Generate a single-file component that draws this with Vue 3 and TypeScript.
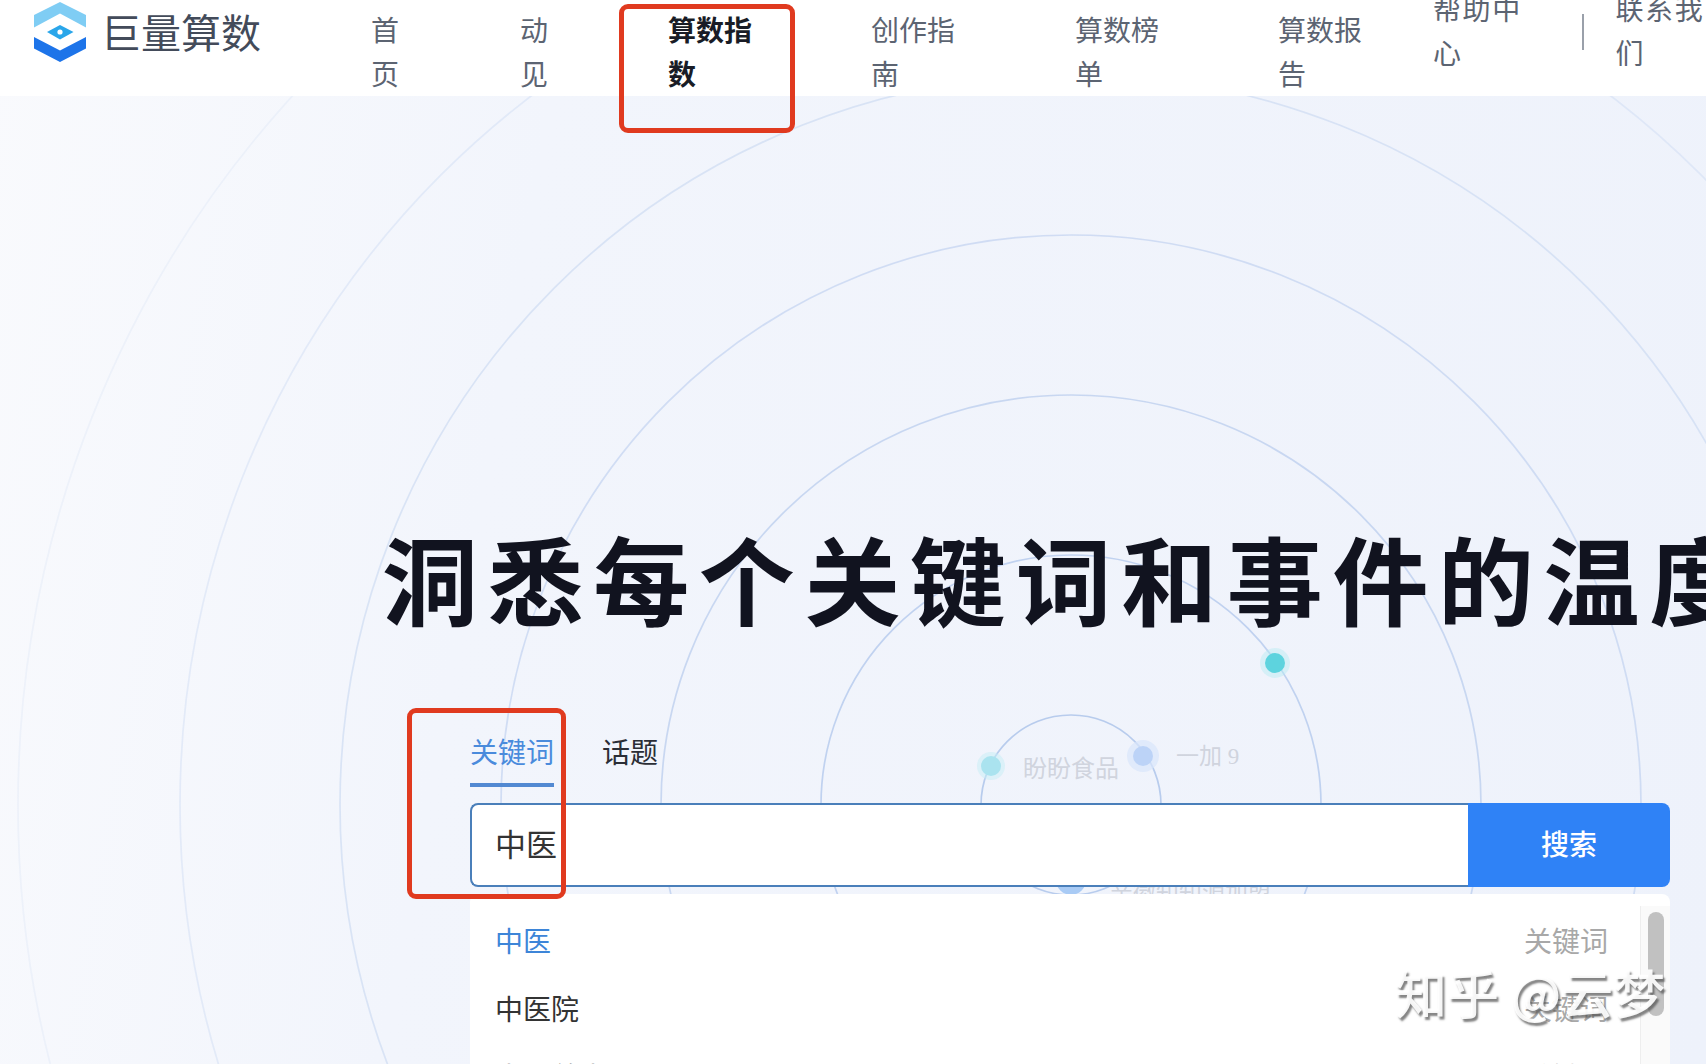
<script setup lang="ts">
interface NavItem { label: string; size: string; active?: boolean }
const nav: NavItem[] = [
  { label: '首页', size: 'n1' },
  { label: '动见', size: 'n1b' },
  { label: '算数指数', size: 'n2', active: true },
  { label: '创作指南', size: 'n2b' },
  { label: '算数榜单', size: 'n2' },
  { label: '算数报告', size: 'n3' },
]
const radii: number[] = [90, 250, 410, 570, 731, 891, 1053]
const ringOpacity = (i: number): number => 1 - i * 0.14
const rows = [
  { text: '中医', kind: '关键词', hit: true },
  { text: '中医院', kind: '关键词', hit: false },
  { text: '中医养生', kind: '关键词', hit: false },
]
</script>

<template>
  <div class="page">
    <svg class="rings" width="1706" height="1064" viewBox="0 0 1706 1064" fill="none">
      <circle
        v-for="(r, i) in radii"
        :key="r"
        cx="1071"
        cy="805"
        :r="r"
        stroke="#b8cced"
        stroke-width="1.7"
        :opacity="ringOpacity(i)"
      />
      <circle cx="1275" cy="663" r="15" fill="#b5ecf1" opacity="0.45" />
      <circle cx="1275" cy="663" r="10" fill="#5dd3de" />
      <circle cx="991" cy="766" r="14" fill="#c5edf5" opacity="0.5" />
      <circle cx="991" cy="766" r="10" fill="#aae3ef" />
      <circle cx="1143" cy="756" r="16" fill="#d8e5fb" opacity="0.7" />
      <circle cx="1143" cy="756" r="10" fill="#bcd3f7" />
      <circle cx="1071" cy="880" r="15" fill="#a9cbf5" />
    </svg>
    <span class="float-label l1">盼盼食品</span>
    <span class="float-label l2">一加 9</span>
    <span class="float-label l3">亲徽知知源加盟</span>

    <header class="header">
      <div class="logo">
        <svg class="logo-mark" width="54" height="62" viewBox="33 1 54 62">
          <polygon points="60,2 86,15 86,27.5 60,13.5 34,27.5 34,15" fill="#7fcdf4" />
          <polygon points="34,37 60,50.5 86,37 86,48.5 60,62 34,48.5" fill="#1d74e9" />
          <polygon points="47,32 60,25 73.5,32 60,39.5" fill="#2aa6ea" />
          <circle cx="60" cy="32" r="2.6" fill="#fff" />
        </svg>
        <span class="logo-text">巨量算数</span>
      </div>
      <nav class="nav">
        <a v-for="item in nav" :key="item.label" class="item" :class="[item.size, { active: item.active }]">{{ item.label }}</a>
        <a class="item help">帮助中心</a>
        <i class="divider"></i>
        <a class="item help contact">联系我们</a>
      </nav>
    </header>

    <main class="main">
      <h1 class="title">洞悉每个关键词和事件的温度</h1>
      <div class="panel">
        <div class="tabs">
          <span class="tab on">关键词</span>
          <span class="tab">话题</span>
        </div>
        <div class="search">
          <div class="input">中医</div>
          <button class="btn">搜索</button>
        </div>
        <div class="dropdown">
          <ul class="list">
            <li v-for="row in rows" :key="row.text" class="row" :class="{ hit: row.hit }">
              <span>{{ row.text }}</span>
              <span class="kind">{{ row.kind }}</span>
            </li>
          </ul>
          <div class="track"><div class="thumb"></div></div>
        </div>
      </div>
    </main>

    <div class="mark m1"></div>
    <div class="mark m2"></div>
    <div class="watermark">知乎&nbsp;@云梦</div>
  </div>
</template>

<style>
html, body { margin: 0; background: #fff; }
</style>

<style scoped>
.page {
  position: relative;
  width: 1706px;
  height: 1064px;
  overflow: hidden;
  background: linear-gradient(100deg, #f9fafd 0%, #f2f5fc 30%, #eef2fb 100%);
  font-family: "Noto Sans CJK SC", "Noto Sans", sans-serif;
}
.rings { position: absolute; left: 0; top: 0; }
.float-label {
  position: absolute;
  color: #d0d4de;
  white-space: nowrap;
  line-height: 1;
}
.l1 { left: 1023px; top: 755px; font-size: 24px; }
.l2 { left: 1176px; top: 745px; font-size: 23px; font-family: "Liberation Serif", "Noto Sans CJK SC", serif; }
.l3 { left: 1110px; top: 880px; font-size: 23px; }

.header {
  position: relative;
  display: flex;
  height: 96px;
  background: #fff;
}
.logo {
  flex: none;
  width: 371px;
  padding-left: 33px;
  box-sizing: border-box;
  display: flex;
  align-items: flex-start;
  gap: 14px;
}
.logo-mark { flex: none; margin-top: 1px; }
.logo-text {
  font-size: 40px;
  line-height: 62px;
  font-weight: 400;
  color: #434b5a;
  white-space: nowrap;
}
.nav { display: flex; align-items: flex-start; }
.item {
  flex: none;
  display: block;
  font-size: 28px;
  line-height: 43.5px;
  color: #5c6472;
  padding-top: 8px;
  box-sizing: content-box;
}
.n1 { width: 30px; margin-right: 119px; }
.n1b { width: 30px; margin-right: 118px; }
.n2 { width: 90px; margin-right: 113px; }
.n2b { width: 90px; margin-right: 114px; }
.n3 { width: 90px; margin-right: 65px; }
.active { color: #191c26; font-weight: 700; }
.help {
  width: 92px;
  letter-spacing: 1.6px;
  padding-top: 0;
  margin-top: -13px;
}
.divider {
  flex: none;
  width: 1.5px;
  height: 36px;
  margin: 14px 32px 0 57px;
  background: #9aa0aa;
}
.contact { width: 92px; }

.main { position: relative; }
.title {
  margin: 426px 0 0 382px;
  font-size: 96px;
  line-height: 110px;
  font-weight: 700;
  letter-spacing: 9.6px;
  color: #11131f;
  white-space: nowrap;
}
.panel { width: 1200px; margin: 98px 0 0 470px; }
.tabs { display: flex; gap: 48px; }
.tab {
  font-size: 28px;
  line-height: 42px;
  padding-bottom: 11px;
  border-bottom: 4px solid transparent;
  color: #2b2e36;
}
.tab.on { color: #4a8bdc; border-bottom-color: #5289d2; }
.search { display: flex; height: 84px; margin-top: 16px; }
.input {
  flex: 1;
  box-sizing: border-box;
  border: 2px solid #4a7fba;
  border-right: 0;
  border-radius: 8px 0 0 8px;
  background: #fff;
  padding-left: 23px;
  font-size: 31px;
  line-height: 76px;
  color: #333;
}
.btn {
  flex: none;
  width: 202px;
  border: 0;
  padding: 0 0 4px;
  border-radius: 0 8px 8px 0;
  background: #2f82f6;
  color: #fff;
  font: 500 28px "Noto Sans CJK SC", sans-serif;
}
.dropdown {
  display: flex;
  margin-top: 7px;
  height: 240px;
  background: #fff;
  border-radius: 8px 8px 0 0;
}
.list {
  flex: 1;
  margin: 0;
  padding: 12px 32px 0 25px;
  list-style: none;
}
.row {
  display: flex;
  justify-content: space-between;
  height: 68px;
  font-size: 28px;
  line-height: 68px;
  color: #333;
}
.row.hit { color: #3d85d8; }
.kind { color: #a8a8a8; }
.track {
  flex: none;
  width: 30px;
  box-sizing: border-box;
  margin-top: 12px;
  padding: 6px 7px 0 7px;
  background: #fafafa;
  border-left: 1px solid #eee;
}
.thumb {
  width: 16px;
  height: 104px;
  border-radius: 8px;
  background: #c1c1c1;
}

.mark {
  position: absolute;
  box-sizing: border-box;
  border: 5px solid #e03a1f;
  border-radius: 9px;
}
.m1 { left: 619px; top: 4px; width: 176px; height: 129px; }
.m2 { left: 407px; top: 708px; width: 159px; height: 191px; }
.watermark {
  position: absolute;
  left: 1395px;
  top: 957px;
  font-size: 52px;
  line-height: 70px;
  font-weight: 500;
  letter-spacing: 0;
  word-spacing: 0;
  color: rgba(255, 255, 255, 0.92);
  text-shadow: 2px 3px 2px rgba(80, 80, 80, 0.7);
  white-space: nowrap;
}
</style>
